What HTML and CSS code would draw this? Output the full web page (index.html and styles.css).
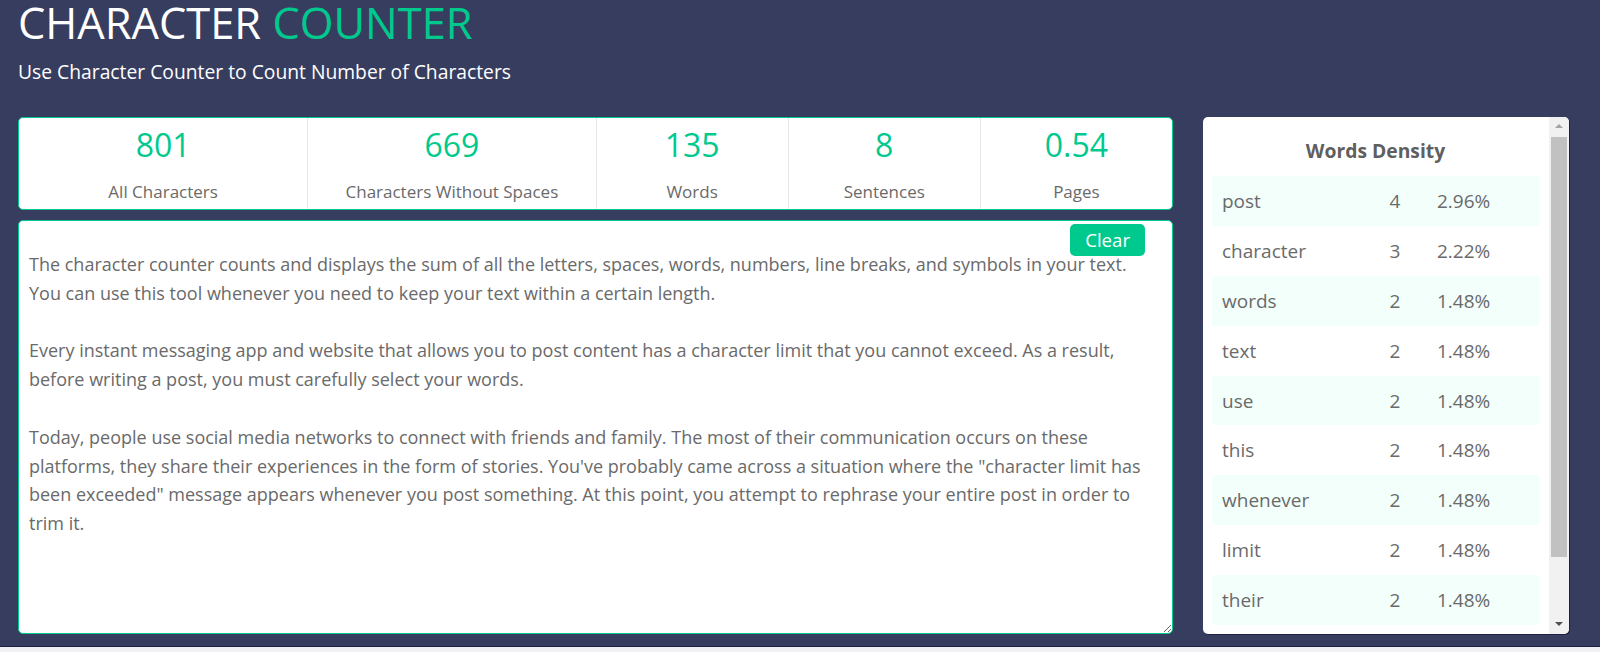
FILE: index.html
```html
<!DOCTYPE html>
<html lang="en">
<head>
<meta charset="utf-8">
<title>Character Counter</title>
<link rel="stylesheet" href="styles.css">
</head>
<body>
<div class="page">
  <header class="hero">
    <h1 class="hero-title">CHARACTER <span class="accent">COUNTER</span></h1>
    <p class="hero-sub">Use Character Counter to Count Number of Characters</p>
  </header>
  <main class="layout">
    <section class="workspace">
      <div class="stats">
        <div class="stat"><div class="stat-num">801</div><div class="stat-label">All Characters</div></div>
        <div class="stat"><div class="stat-num">669</div><div class="stat-label">Characters Without Spaces</div></div>
        <div class="stat"><div class="stat-num">135</div><div class="stat-label">Words</div></div>
        <div class="stat"><div class="stat-num">8</div><div class="stat-label">Sentences</div></div>
        <div class="stat"><div class="stat-num">0.54</div><div class="stat-label">Pages</div></div>
      </div>
      <div class="editor">
        <textarea class="editor-input" spellcheck="false">The character counter counts and displays the sum of all the letters, spaces, words, numbers, line breaks, and symbols in your text.
You can use this tool whenever you need to keep your text within a certain length.

Every instant messaging app and website that allows you to post content has a character limit that you cannot exceed. As a result, before writing a post, you must carefully select your words.

Today, people use social media networks to connect with friends and family. The most of their communication occurs on these platforms, they share their experiences in the form of stories. You've probably came across a situation where the "character limit has been exceeded" message appears whenever you post something. At this point, you attempt to rephrase your entire post in order to trim it.</textarea>
        <button class="clear-btn" type="button">Clear</button>
      </div>
    </section>
    <aside class="density">
      <div class="density-body">
        <h2 class="density-title">Words Density</h2>
        <div class="density-list">
          <div class="d-row"><span class="d-word">post</span><span class="d-count">4</span><span class="d-pct">2.96%</span></div>
          <div class="d-row"><span class="d-word">character</span><span class="d-count">3</span><span class="d-pct">2.22%</span></div>
          <div class="d-row"><span class="d-word">words</span><span class="d-count">2</span><span class="d-pct">1.48%</span></div>
          <div class="d-row"><span class="d-word">text</span><span class="d-count">2</span><span class="d-pct">1.48%</span></div>
          <div class="d-row"><span class="d-word">use</span><span class="d-count">2</span><span class="d-pct">1.48%</span></div>
          <div class="d-row"><span class="d-word">this</span><span class="d-count">2</span><span class="d-pct">1.48%</span></div>
          <div class="d-row"><span class="d-word">whenever</span><span class="d-count">2</span><span class="d-pct">1.48%</span></div>
          <div class="d-row"><span class="d-word">limit</span><span class="d-count">2</span><span class="d-pct">1.48%</span></div>
          <div class="d-row"><span class="d-word">their</span><span class="d-count">2</span><span class="d-pct">1.48%</span></div>
          <div class="d-row"><span class="d-word">counter</span><span class="d-count">1</span><span class="d-pct">0.74%</span></div>
        </div>
      </div>
      <div class="scrollbar" aria-hidden="true">
        <div class="sb-btn">
          <svg width="20" height="17" viewBox="0 0 20 17"><polygon points="6,11 14,11 10,7" fill="#a3a3a3"/></svg>
        </div>
        <div class="sb-track"><div class="sb-thumb"></div></div>
        <div class="sb-btn">
          <svg width="20" height="17" viewBox="0 0 20 17"><polygon points="6,5 14,5 10,9" fill="#505050"/></svg>
        </div>
      </div>
    </aside>
  </main>
</div>
</body>
</html>
```
FILE: styles.css
```css
html, body {
  margin: 0;
  padding: 0;
  background: #f1f1f4;
}

body {
  font-family: "Open Sans", "Noto Sans", sans-serif;
}

.page {
  box-sizing: border-box;
  height: 647px;
  background: #373d5f;
  border-bottom: 1px solid #1c2142;
  padding: 0 31px 0 18px;
  overflow: hidden;
}

.hero-title {
  margin: 0;
  padding-top: 1px;
  font-size: 43.4px;
  line-height: 43px;
  font-weight: 400;
  color: #ffffff;
  white-space: nowrap;
}

.accent {
  color: #00c98d;
}

.hero-sub {
  margin: 14.5px 0 0;
  font-size: 19.3px;
  line-height: 26px;
  color: #ffffff;
}

.layout {
  margin-top: 32.5px;
  display: grid;
  grid-template-columns: 1155px 366px;
  column-gap: 30px;
}

.workspace {
  display: flex;
  flex-direction: column;
  gap: 10px;
}

.stats {
  box-sizing: border-box;
  height: 93px;
  background: #ffffff;
  border: 1px solid #00c98d;
  border-radius: 5px;
  display: grid;
  grid-template-columns: 3fr 3fr 2fr 2fr 2fr;
}

.stat {
  display: flex;
  flex-direction: column;
  align-items: center;
  padding-top: 8px;
}

.stat + .stat {
  border-left: 1px solid #e6e6e6;
}

.stat-num {
  font-size: 32px;
  line-height: 38px;
  color: #00c98d;
}

.stat-label {
  margin-top: 16px;
  font-size: 17px;
  line-height: 24px;
  color: #6a6a6a;
  white-space: nowrap;
}

.editor {
  position: relative;
  box-sizing: border-box;
  height: 414px;
  background: #ffffff;
  border: 1px solid #00c98d;
  border-radius: 5px;
}

.editor-input {
  display: block;
  box-sizing: border-box;
  width: 100%;
  height: 100%;
  margin: 0;
  border: 0;
  outline: none;
  background: transparent;
  border-radius: 5px;
  padding: 29px 30px 10px 10px;
  font-family: "Open Sans", "Noto Sans", sans-serif;
  font-size: 18px;
  line-height: 28.8px;
  color: #6a6a6a;
  resize: vertical;
  overflow: hidden;
}

.clear-btn {
  position: absolute;
  top: 3px;
  right: 27px;
  height: 32px;
  padding: 0 15px;
  border: 0;
  border-radius: 5px;
  background: #00c98d;
  color: #ffffff;
  font-family: "Open Sans", "Noto Sans", sans-serif;
  font-size: 18.6px;
  line-height: 32px;
  cursor: pointer;
}

.density {
  box-sizing: border-box;
  height: 517px;
  background: #ffffff;
  border-radius: 5px;
  box-shadow: 1px 1px 0 #1c2142;
  overflow: hidden;
  display: flex;
}

.density-body {
  flex: 1;
  min-width: 0;
  overflow: hidden;
  padding: 20px 10px 0 9px;
}

.density-title {
  margin: 0 0 12px;
  text-align: center;
  font-size: 19.3px;
  line-height: 27px;
  font-weight: 700;
  color: #5f5f5f;
}

.density-list {
  display: flex;
  flex-direction: column;
}

.d-row {
  display: grid;
  grid-template-columns: 1fr 40px 92px;
  column-gap: 22px;
  align-items: center;
  flex: 0 0 49.9px;
  height: 49.9px;
  padding: 0 10px;
  font-size: 19px;
  color: #6a6a6a;
}

.d-row:nth-child(odd) {
  background: #f3fffb;
}

.d-count {
  text-align: center;
}

.scrollbar {
  flex: 0 0 20px;
  display: flex;
  flex-direction: column;
  background: #f1f1f1;
}

.sb-btn {
  flex: 0 0 17px;
  height: 17px;
}

.sb-btn svg {
  display: block;
}

.sb-track {
  flex: 1;
  padding: 3px 2px 0;
}

.sb-thumb {
  height: 420px;
  background: #c1c1c1;
}
```
